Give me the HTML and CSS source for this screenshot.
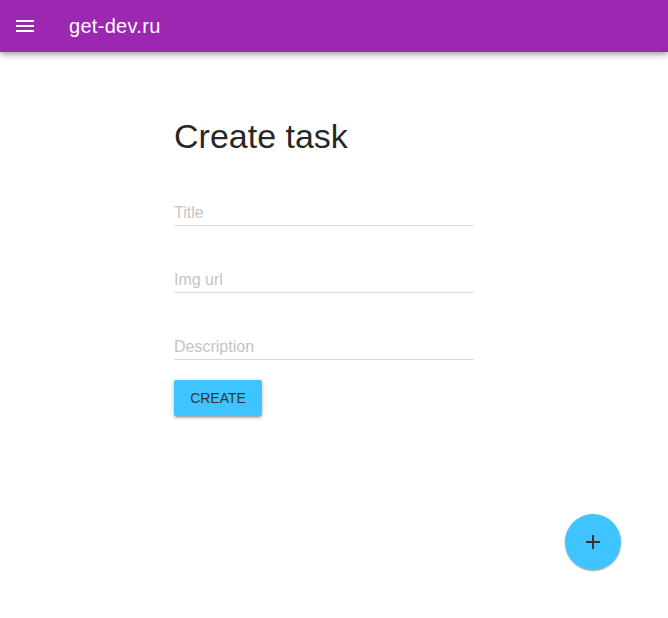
FILE: index.html
```html
<!DOCTYPE html>
<html lang="ru">
<head>
<meta charset="utf-8">
<title>get-dev.ru</title>
<link rel="stylesheet" href="styles.css">
</head>
<body>
<header class="appbar">
  <button class="menu-btn" aria-label="menu">
    <svg width="24" height="24" viewBox="0 0 24 24"><path d="M3 18h18v-2H3v2zm0-5h18v-2H3v2zm0-7v2h18V6H3z" fill="#fff"/></svg>
  </button>
  <span class="brand">get-dev.ru</span>
</header>
<main class="main">
  <form class="form">
    <h1 class="heading">Create task</h1>
    <div class="field"><input class="input" type="text" placeholder="Title"></div>
    <div class="field"><input class="input" type="text" placeholder="Img url"></div>
    <div class="field"><input class="input" type="text" placeholder="Description"></div>
    <button type="button" class="btn">CREATE</button>
  </form>
</main>
<button class="fab" aria-label="add">
  <svg width="24" height="24" viewBox="0 0 24 24"><path d="M19 13h-6v6h-2v-6H5v-2h6V5h2v6h6v2z" fill="#333"/></svg>
</button>
</body>
</html>
```
FILE: styles.css
```css
* { box-sizing: border-box; }
html, body { margin: 0; padding: 0; background: #fff; }
body { font-family: "Liberation Sans", Arial, sans-serif; height: 618px; overflow: hidden; }

.appbar {
  height: 52px;
  background: #9c27b0;
  display: flex;
  align-items: center;
  padding-left: 12px;
  box-shadow: 0 2px 4px -1px rgba(0,0,0,0.2), 0 4px 5px 0 rgba(0,0,0,0.14), 0 1px 10px 0 rgba(0,0,0,0.12);
  position: relative;
  z-index: 1;
}
.menu-btn {
  width: 26px; height: 26px;
  padding: 0; border: 0; background: none;
  display: flex; align-items: center; justify-content: center;
}
.brand {
  margin-left: 31px;
  color: #fff;
  font-size: 20px;
  font-weight: 400;
  letter-spacing: 0.3px;
}

.main { display: flex; justify-content: flex-start; padding-left: 174px; padding-top: 64px; }
.form { width: 300px; display: flex; flex-direction: column; align-items: flex-start; }
.heading {
  margin: 0 0 3px;
  font-size: 34px;
  line-height: 40px;
  font-weight: 400;
  color: rgba(0,0,0,0.87);
}
.field {
  width: 300px;
  height: 67px;
  display: flex;
  flex-direction: column;
  justify-content: flex-end;
}
.input {
  width: 100%;
  border: 0;
  border-bottom: 1px solid #dcdcdc;
  padding: 6px 0 3px;
  font: 16px/19px "Liberation Sans", Arial, sans-serif;
  color: rgba(0,0,0,0.87);
  outline: none;
  background: transparent;
}
.input::placeholder { color: #c4c4c4; opacity: 1; }

.btn {
  margin-top: 20px;
  width: 88px;
  height: 36px;
  border: 0;
  border-radius: 2px;
  background: #40c4ff;
  color: #333;
  font: 400 14px "Liberation Sans", Arial, sans-serif;
  box-shadow: 0 1px 5px 0 rgba(0,0,0,0.2), 0 2px 2px 0 rgba(0,0,0,0.14), 0 3px 1px -2px rgba(0,0,0,0.12);
}

.fab {
  position: fixed;
  left: 565px;
  top: 514px;
  width: 56px;
  height: 56px;
  border-radius: 50%;
  border: 0;
  padding: 0;
  background: #40c4ff;
  display: flex; align-items: center; justify-content: center;
  box-shadow: 0 1px 3px 0 rgba(0,0,0,0.2), 0 1px 1px 0 rgba(0,0,0,0.14), 0 2px 1px -1px rgba(0,0,0,0.12);
}
```
